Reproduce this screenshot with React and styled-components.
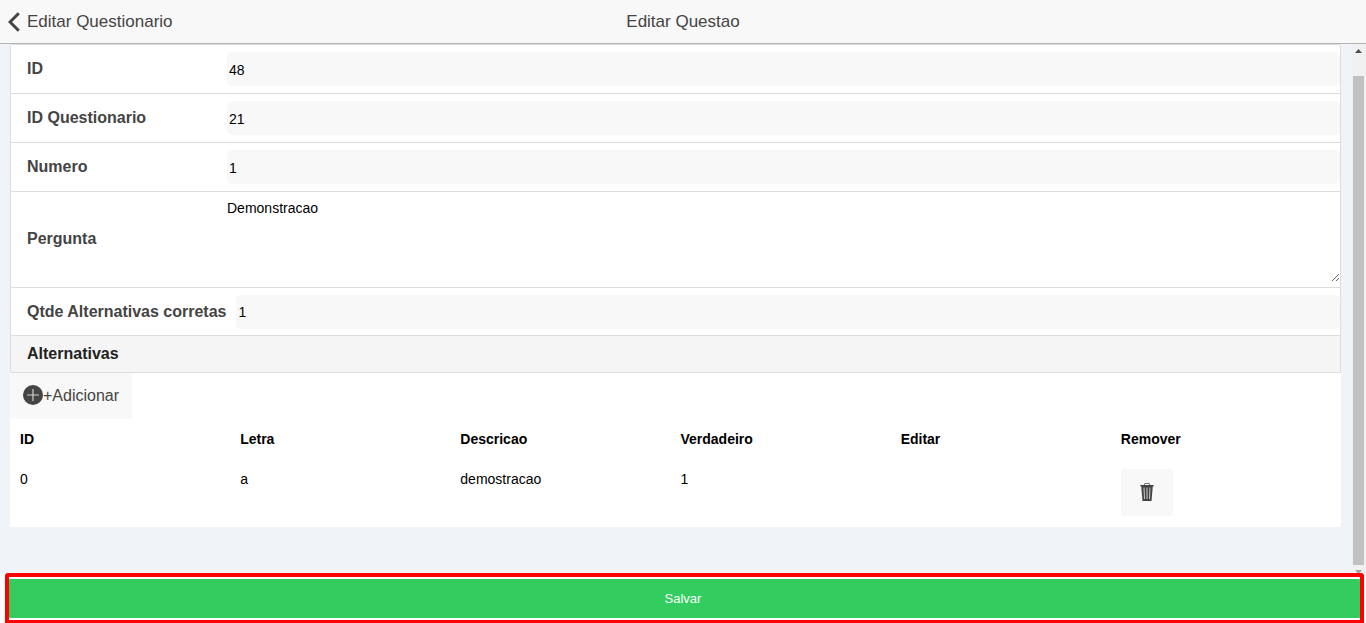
import React from "react";
import styled, { createGlobalStyle } from "styled-components";

const GlobalStyle = createGlobalStyle`
  *, *::before, *::after { box-sizing: border-box; }
  body {
    margin: 0;
    background: #fff;
    color: #000;
    font-family: "Liberation Sans", Arial, sans-serif;
    font-size: 14px;
    line-height: 20px;
  }
  button, input, textarea { font: inherit; color: inherit; }
`;

const Page = styled.div`
  display: flex;
  flex-direction: column;
  height: 100vh;
  overflow: hidden;
`;

const Header = styled.header`
  flex: none;
  display: grid;
  grid-template-columns: 1fr auto 1fr;
  align-items: center;
  height: 44px;
  padding: 0 8px;
  background: #f8f8f8;
  border-bottom: 1px solid #b2b2b2;
  color: #444;
`;

const BackButton = styled.button`
  display: flex;
  align-items: center;
  justify-self: start;
  gap: 7px;
  padding: 0;
  border: 0;
  background: none;
  font-size: 17px;
  cursor: pointer;
`;

const Title = styled.h1`
  margin: 0;
  font-size: 17px;
  font-weight: 400;
`;

const Main = styled.div`
  flex: 1;
  min-height: 0;
  display: flex;
  background: #f0f4f8;
`;

const Content = styled.main`
  flex: 1;
  min-width: 0;
  padding: 0 10px;
  overflow: hidden;
`;

const Card = styled.form`
  background: #fff;
  border-radius: 2px;
`;

const Fields = styled.div`
  border: 1px solid #ddd;
  border-radius: 2px 2px 0 0;
`;

const fieldPadding = {
  regular: "7px 0 7px 16px",
  compact: "7px 0 6px 16px",
  multiline: "6px 0 5px 16px",
};

const Field = styled.label`
  display: flex;
  align-items: center;
  padding: ${(p) => fieldPadding[p.$kind || "regular"]};
  border-bottom: 1px solid #ddd;
`;

const FieldLabel = styled.span`
  flex: none;
  min-width: 200px;
  padding-right: ${(p) => (p.$wide ? "10px" : "0")};
  padding-bottom: ${(p) => (p.$raised ? "2px" : "0")};
  color: #444;
  font-size: 16px;
  font-weight: 700;
`;

const TextInput = styled.input`
  flex: 1;
  min-width: 0;
  height: 34px;
  padding: ${(p) => (p.$compact ? "1px 2px" : "3px 2px 1px")};
  border: 0;
  border-radius: 5px;
  background: #f8f8f8;
`;

const TextArea = styled.textarea`
  flex: 1;
  min-width: 0;
  height: 84px;
  padding: 0;
  border: 0;
  background: #fff;
  resize: both;
`;

const Divider = styled.h2`
  margin: 0;
  padding: 8px 16px;
  background: #f5f5f5;
  color: #222;
  font-size: 16px;
  font-weight: 700;
`;

const SoftButton = styled.button`
  display: inline-flex;
  align-items: center;
  justify-content: center;
  height: ${(p) => (p.$square ? "47px" : "46px")};
  min-width: 52px;
  padding: 0 13px;
  border: 0;
  border-radius: 3px;
  background: #f8f8f8;
  color: #444;
  font-size: 16px;
  vertical-align: top;
  cursor: pointer;

  svg { margin-bottom: 2px; }
`;

const TableWrap = styled.div`
  padding: 0 5px 1px;
`;

const Table = styled.table`
  width: 100%;
  table-layout: fixed;
  border-collapse: collapse;
`;

const Cell = styled.td`
  padding: 10px 5px;
  text-align: left;
  vertical-align: top;
`;

const ScrollTrack = styled.div`
  flex: none;
  display: flex;
  flex-direction: column;
  align-items: center;
  width: 15px;
  padding-top: 5px;
  background: #f1f1f1;

  svg { flex: none; }
`;

const ScrollThumb = styled.div`
  flex: 1;
  width: 11px;
  margin: 23px 0 5px;
  background: #c1c1c1;
`;

const Footer = styled.footer`
  flex: none;
  padding: 0 2px 0 5px;
  background: #fff;
`;

const SaveFrame = styled.div`
  padding: 2px 0;
  border: 4px solid #f00;
  border-bottom-width: 3px;
  border-radius: 3px 3px 0 0;
`;

const SaveButton = styled.button`
  display: block;
  width: 100%;
  height: 39px;
  padding: 0 3px 0 0;
  border: 0;
  border-radius: 1px;
  background: #33cd5f;
  color: #fff;
  font-size: 13px;
  cursor: pointer;
`;

const BackIcon = () => (
  <svg width="12" height="20" viewBox="0 0 12 20" aria-hidden="true">
    <path d="M10.8 1.2 2 10l8.800 8.800" fill="none" stroke="#444" strokeWidth="3" />
  </svg>
);

const PlusIcon = () => (
  <svg width="20" height="20" viewBox="0 0 20 20" aria-hidden="true">
    <circle cx="10" cy="10" r="10" fill="#444" />
    <path d="M10 4v12M4 10h12" stroke="#d0d0d0" strokeWidth="1.200" />
  </svg>
);

const TrashIcon = () => (
  <svg width="14" height="18" viewBox="0 0 14 18" aria-hidden="true">
    <path d="M4.500 2V1q0-.5.5-.5h4q.5 0 .5.5v1" fill="none" stroke="#777" />
    <path d="M.3 2h13.400v1.200H.3zM1.200 3.200h11.600L11.500 18h-9z" fill="#444" />
    <path d="M4 4.500l.5 11.500M7 4.500V16M10 4.500 9.500 16" stroke="#ccc" strokeWidth="1" />
  </svg>
);

const ArrowIcon = ({ down }) => (
  <svg width="7" height={down ? 3 : 4} viewBox={down ? "0 0 7 3" : "0 0 7 4"} aria-hidden="true">
    <path d={down ? "M0 0h7L3.500 4z" : "M3.500 0 7 4H0z"} fill={down ? "#a3a3a3" : "#505050"} />
  </svg>
);

const TextField = ({ label, value, compact }) => (
  <Field $kind={compact ? "compact" : "regular"}>
    <FieldLabel $wide={compact}>{label}</FieldLabel>
    <TextInput type="text" defaultValue={value} $compact={compact} />
  </Field>
);

const columns = ["ID", "Letra", "Descricao", "Verdadeiro", "Editar", "Remover"];
const alternatives = [{ id: 0, letter: "a", description: "demostracao", correct: 1 }];

export default function App() {
  return (
    <>
      <GlobalStyle />
      <Page>
        <Header>
          <BackButton type="button">
            <BackIcon />
            Editar Questionario
          </BackButton>
          <Title>Editar Questao</Title>
        </Header>
        <Main>
          <Content>
            <Card id="question">
              <Fields>
                <TextField label="ID" value="48" />
                <TextField label="ID Questionario" value="21" />
                <TextField label="Numero" value="1" />
                <Field $kind="multiline">
                  <FieldLabel $raised>Pergunta</FieldLabel>
                  <TextArea defaultValue="Demonstracao" />
                </Field>
                <TextField label="Qtde Alternativas corretas" value="1" compact />
                <Divider>Alternativas</Divider>
              </Fields>
              <SoftButton type="button">
                <PlusIcon />
                +Adicionar
              </SoftButton>
              <TableWrap>
                <Table>
                  <thead>
                    <tr>
                      {columns.map((name) => (
                        <Cell as="th" scope="col" key={name}>{name}</Cell>
                      ))}
                    </tr>
                  </thead>
                  <tbody>
                    {alternatives.map((item) => (
                      <tr key={item.id}>
                        <Cell>{item.id}</Cell>
                        <Cell>{item.letter}</Cell>
                        <Cell>{item.description}</Cell>
                        <Cell>{item.correct}</Cell>
                        <Cell />
                        <Cell>
                          <SoftButton type="button" $square aria-label="Remover">
                            <TrashIcon />
                          </SoftButton>
                        </Cell>
                      </tr>
                    ))}
                  </tbody>
                </Table>
              </TableWrap>
            </Card>
          </Content>
          <ScrollTrack aria-hidden="true">
            <ArrowIcon />
            <ScrollThumb />
            <ArrowIcon down />
          </ScrollTrack>
        </Main>
        <Footer>
          <SaveFrame>
            <SaveButton type="submit" form="question">Salvar</SaveButton>
          </SaveFrame>
        </Footer>
      </Page>
    </>
  );
}
